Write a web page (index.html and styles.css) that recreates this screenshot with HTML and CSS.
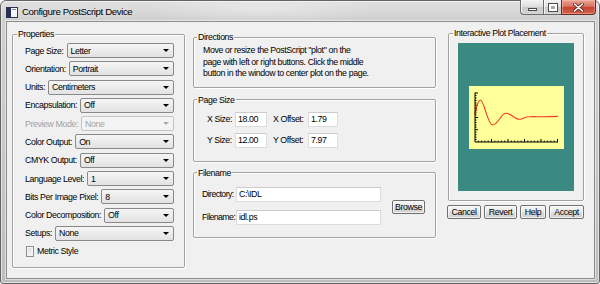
FILE: index.html
```html
<!DOCTYPE html>
<html>
<head>
<meta charset="utf-8">
<title>Configure PostScript Device</title>
<link rel="stylesheet" href="styles.css">
</head>
<body>
<div class="window">
  <div class="titlebar">
    <svg class="app-icon" width="12" height="11" viewBox="0 0 12 11">
      <rect x="0.5" y="0.5" width="11" height="10" fill="#f4f6f8" stroke="#2a3350"/>
      <rect x="1" y="1" width="4" height="9" fill="#24305a"/>
      <rect x="6" y="2" width="4" height="1" fill="#7a86a8"/>
    </svg>
    <span class="title">Configure PostScript Device</span>
    <div class="caption">
      <span class="cap cap-min"><span class="glyph-min"></span></span>
      <span class="cap cap-max"><span class="glyph-max"></span></span>
      <span class="cap cap-close">
        <svg width="11" height="9" viewBox="0 0 11 9">
          <path d="M1.5 1 L9.5 8 M9.5 1 L1.5 8" stroke="#5a2a24" stroke-width="3.2" stroke-linecap="round"/>
          <path d="M1.5 1 L9.5 8 M9.5 1 L1.5 8" stroke="#ffffff" stroke-width="1.6" stroke-linecap="round"/>
        </svg>
      </span>
    </div>
  </div>
  <div class="client">
    <fieldset class="group props">
      <legend>Properties</legend>
      <div class="props-body">
        <div class="rows">
          <div class="row"><span class="lbl">Page Size:</span><span class="combo">Letter</span></div>
          <div class="row"><span class="lbl">Orientation:</span><span class="combo">Portrait</span></div>
          <div class="row"><span class="lbl">Units:</span><span class="combo">Centimeters</span></div>
          <div class="row"><span class="lbl">Encapsulation:</span><span class="combo">Off</span></div>
          <div class="row disabled"><span class="lbl">Preview Mode:</span><span class="combo">None</span></div>
          <div class="row"><span class="lbl">Color Output:</span><span class="combo">On</span></div>
          <div class="row"><span class="lbl">CMYK Output:</span><span class="combo">Off</span></div>
          <div class="row"><span class="lbl">Language Level:</span><span class="combo">1</span></div>
          <div class="row"><span class="lbl">Bits Per Image Pixel:</span><span class="combo">8</span></div>
          <div class="row"><span class="lbl">Color Decomposition:</span><span class="combo">Off</span></div>
          <div class="row"><span class="lbl">Setups:</span><span class="combo">None</span></div>
        </div>
        <div class="check"><span class="box"></span>Metric Style</div>
      </div>
    </fieldset>

    <div class="middle">
      <fieldset class="group directions">
        <legend>Directions</legend>
        <p class="dir-text">Move or resize the PostScript "plot" on the<br>page with left or right buttons. Click the middle<br>button in the window to center plot on the page.</p>
      </fieldset>

      <fieldset class="group pagesize">
        <legend>Page Size</legend>
        <div class="size-grid">
          <span class="lbl">X Size:</span><span class="field">18.00</span>
          <span class="lbl lbl2">X Offset:</span><span class="field">1.79</span>
          <span class="lbl">Y Size:</span><span class="field">12.00</span>
          <span class="lbl lbl2">Y Offset:</span><span class="field">7.97</span>
        </div>
      </fieldset>

      <fieldset class="group filename">
        <legend>Filename</legend>
        <div class="file-body">
          <div class="file-grid">
            <span class="lbl">Directory:</span><span class="field wide">C:\IDL</span>
            <span class="lbl">Filename:</span><span class="field wide">idl.ps</span>
          </div>
          <span class="btn browse">Browse</span>
        </div>
      </fieldset>
    </div>

    <div class="right">
      <fieldset class="group placement">
        <legend>Interactive Plot Placement</legend>
        <div class="place-body">
          <div class="page">
            <svg class="plot" width="95" height="63" viewBox="0 0 95 63">
              <rect width="95" height="63" fill="#ffff99"/>
              <g stroke="#000" stroke-width="1" fill="none">
                <path d="M6 6.5 V56 H89"/>
                <path d="M22.5 56 V53 M39 56 V53 M55.5 56 V53 M72 56 V53 M88.5 56 V53"/>
                <path d="M9.3 56 V54.6 M12.6 56 V54.6 M15.9 56 V54.6 M19.2 56 V54.6 M25.8 56 V54.6 M29.1 56 V54.6 M32.4 56 V54.6 M35.7 56 V54.6 M42.3 56 V54.6 M45.6 56 V54.6 M48.9 56 V54.6 M52.2 56 V54.6 M58.8 56 V54.6 M62.1 56 V54.6 M65.4 56 V54.6 M68.7 56 V54.6 M75.3 56 V54.6 M78.6 56 V54.6 M81.9 56 V54.6 M85.2 56 V54.6"/>
                <path d="M6 7 H9 M6 19.2 H9 M6 31.5 H9 M6 43.7 H9"/>
                <path d="M6 9.5 H7.5 M6 12 H7.5 M6 14.5 H7.5 M6 17 H7.5 M6 21.7 H7.5 M6 24.2 H7.5 M6 26.7 H7.5 M6 29 H7.5 M6 34 H7.5 M6 36.5 H7.5 M6 39 H7.5 M6 41.2 H7.5 M6 46.2 H7.5 M6 48.7 H7.5 M6 51.2 H7.5 M6 53.6 H7.5"/>
              </g>
              <path d="M6 29 C7.5 20 9 14 11.5 14 C15 14 18.5 39 23.7 39 C29 39 32 27.3 37 27.3 C42 27.3 46 33.3 50.3 33.3 C54 33.3 56 30.7 60 30.7 C67 30.5 76 31 89 30.4" fill="none" stroke="#f43a2a" stroke-width="1.1"/>
              <path d="M6 29 C6.4 26 6.8 23.5 7.2 21.8" fill="none" stroke="#a01010" stroke-width="1.3"/>
            </svg>
          </div>
        </div>
      </fieldset>
      <div class="buttons">
        <span class="btn b-cancel">Cancel</span>
        <span class="btn b-revert">Revert</span>
        <span class="btn b-help">Help</span>
        <span class="btn b-accept">Accept</span>
      </div>
    </div>
  </div>
</div>
</body>
</html>
```

FILE: styles.css
```css
html, body {
  margin: 0;
  padding: 0;
}

body {
  width: 600px;
  height: 284px;
  overflow: hidden;
  background: #ffffff;
  font-family: "Liberation Sans", Arial, sans-serif;
  font-size: 8.8px;
  letter-spacing: -0.4px;
  color: #000;
}

/* ---------- window frame ---------- */
.window {
  box-sizing: border-box;
  width: 600px;
  height: 284px;
  border: 1px solid #646464;
  border-radius: 6px 6px 3px 3px;
  background:
    radial-gradient(ellipse 120px 14px at 260px 8px, rgba(255,255,255,0.35), rgba(255,255,255,0)),
    linear-gradient(180deg, #e0e0e0 0px, #cfcfcf 20px, #c6c6c6 60%, #bdbdbd 100%);
  padding: 0 4px 4px 5px;
  display: flex;
  flex-direction: column;
  box-shadow: inset 0 0 0 1px rgba(255,255,255,0.55);
}

.titlebar {
  height: 20px;
  display: flex;
  align-items: flex-start;
  flex: none;
}

.app-icon {
  margin-top: 6px;
  flex: none;
}

.title {
  margin-left: 4px;
  font-size: 9.7px;
  letter-spacing: -0.4px;
  line-height: 20px;
  padding-top: 1px;
  color: #000;
  text-shadow: 0 0 6px rgba(255,255,255,0.9);
}

.caption {
  margin-left: auto;
  margin-right: -1px;
  margin-top: -1px;
  display: flex;
}

.cap {
  box-sizing: border-box;
  height: 15px;
  display: flex;
  align-items: center;
  justify-content: center;
  border: 1px solid #6c6c6c;
  border-top: none;
}

.cap-min {
  width: 23px;
  border-right: none;
  border-bottom-left-radius: 4px;
  background: linear-gradient(180deg, #f3f3f3 0%, #dedede 48%, #c9c9c9 52%, #d7d7d7 100%);
  box-shadow: inset 1px 0 0 rgba(255,255,255,0.7);
}

.cap-max {
  width: 18px;
  border-right: none;
  background: linear-gradient(180deg, #f3f3f3 0%, #dedede 48%, #c9c9c9 52%, #d7d7d7 100%);
  box-shadow: inset 1px 0 0 rgba(255,255,255,0.7);
}

.cap-close {
  width: 35px;
  border-color: #6b2a22;
  border-bottom-right-radius: 4px;
  background: linear-gradient(180deg, #eaa594 0%, #d87560 45%, #c5452f 52%, #d3604a 100%);
  box-shadow: inset 0 0 0 1px rgba(255,200,190,0.45);
}

.glyph-min {
  box-sizing: border-box;
  width: 9px;
  height: 3px;
  margin-top: 5px;
  background: #fff;
  border: 1px solid #4a4a4a;
}

.glyph-max {
  box-sizing: border-box;
  width: 8px;
  height: 7px;
  border: 2px solid #fff;
  outline: 1px solid #4a4a4a;
  background: #a8a8a8;
}

/* ---------- client area ---------- */
.client {
  box-sizing: border-box;
  flex: 1;
  background: #f0f0f0;
  border: 1px solid #8c8c8c;
  display: flex;
  align-items: flex-start;
  padding-left: 5px;
  box-shadow: 0 0 0 1px rgba(255,255,255,0.5);
}

/* group boxes */
.group {
  box-sizing: border-box;
  margin: 0;
  padding: 0;
  min-width: 0;
  border: 1px solid #a2a2a2;
  border-radius: 2px;
  box-shadow: inset 1px 1px 0 #ffffff, 1px 1px 0 #ffffff;
}

.group legend {
  margin-left: 3px;
  padding: 0 1px;
  line-height: 12px;
  background: #f0f0f0;
}

.props legend {
  margin-left: 4px;
}

.placement legend {
  margin-left: 4px;
}

/* ---------- properties ---------- */
.props {
  width: 173px;
  margin-top: 6px;
}

.props-body {
  padding: 3px 10px 10px 12px;
}

.rows {
  display: flex;
  flex-direction: column;
  gap: 3.3px;
}

.row {
  height: 15px;
  display: flex;
  align-items: center;
}

.lbl {
  white-space: nowrap;
}

.row .lbl {
  margin-right: 3px;
}

.combo {
  box-sizing: border-box;
  flex: 1;
  height: 15px;
  display: flex;
  align-items: center;
  padding-left: 3px;
  padding-right: 4px;
  border: 1px solid #898989;
  border-radius: 2px;
  background: linear-gradient(180deg, #f5f5f5 0%, #ececec 50%, #e2e2e2 100%);
  white-space: nowrap;
}

.combo::after {
  content: "";
  margin-left: auto;
  border-left: 3px solid transparent;
  border-right: 3px solid transparent;
  border-top: 3px solid #000;
}

.row.disabled .lbl {
  color: #a3a3a3;
}

.row.disabled .combo {
  color: #a3a3a3;
  border-color: #c4c4c4;
  background: #f4f4f4;
}

.row.disabled .combo::after {
  border-top-color: #a8a8a8;
}

.check {
  margin-top: 5px;
  margin-left: 1px;
  height: 11px;
  display: flex;
  align-items: center;
}

.box {
  box-sizing: border-box;
  width: 8px;
  height: 11px;
  margin-right: 3px;
  border: 1px solid #8e8f8f;
  background: linear-gradient(135deg, #d8d8d8 0%, #eeeeee 60%, #f8f8f8 100%);
  box-shadow: inset 0 0 0 1px #f4f4f4;
}

/* ---------- middle column ---------- */
.middle {
  width: 243px;
  margin-left: 8px;
  margin-top: 9px;
  display: flex;
  flex-direction: column;
}

.dir-text {
  margin: 0;
  padding: 2px 4px 7px 9px;
  line-height: 11.5px;
  white-space: nowrap;
}

.pagesize {
  margin-top: 6px;
}

.size-grid {
  display: grid;
  grid-template-columns: 28px 32px 41px 30px;
  row-gap: 6px;
  align-items: center;
  padding: 6px 0 13px 13px;
}

.size-grid .lbl2 {
  padding-left: 6px;
}

.field {
  box-sizing: border-box;
  height: 15px;
  line-height: 13px;
  padding: 0 2px;
  background: #ffffff;
  border: 1px solid #dcdcdc;
  border-top-color: #cbcbcb;
  white-space: nowrap;
}

.filename {
  margin-top: 5px;
}

.file-body {
  display: flex;
  align-items: center;
  padding: 8px 0 12px 8px;
}

.file-grid {
  display: grid;
  grid-template-columns: 34px 145px;
  row-gap: 8px;
  align-items: center;
}

.file-grid .lbl {
  letter-spacing: -0.6px;
}

.btn {
  box-sizing: border-box;
  display: flex;
  align-items: center;
  justify-content: center;
  border: 1px solid #707070;
  border-radius: 2px;
  background: linear-gradient(180deg, #f3f3f3 0%, #ebebeb 48%, #dddddd 52%, #cfcfcf 100%);
  box-shadow: inset 0 0 0 1px rgba(255,255,255,0.7);
  white-space: nowrap;
}

.browse {
  width: 33px;
  height: 14px;
  margin-left: 11px;
  margin-top: 2px;
}

/* ---------- right column ---------- */
.right {
  width: 138px;
  margin-left: 11px;
  margin-top: 5px;
  display: flex;
  flex-direction: column;
}

.placement {
  margin: 0 1px;
}

.place-body {
  padding: 4px 9px 9px 9px;
}

.page {
  height: 148px;
  background: #3a8a82;
  display: flex;
  align-items: center;
  justify-content: center;
}

.plot {
  display: block;
}

.buttons {
  margin-top: 4px;
  display: flex;
  gap: 3px;
}

.buttons .btn {
  height: 14px;
}

.b-cancel { width: 34px; }
.b-revert { width: 33px; }
.b-help { width: 26px; }
.b-accept { width: 35px; }
```
